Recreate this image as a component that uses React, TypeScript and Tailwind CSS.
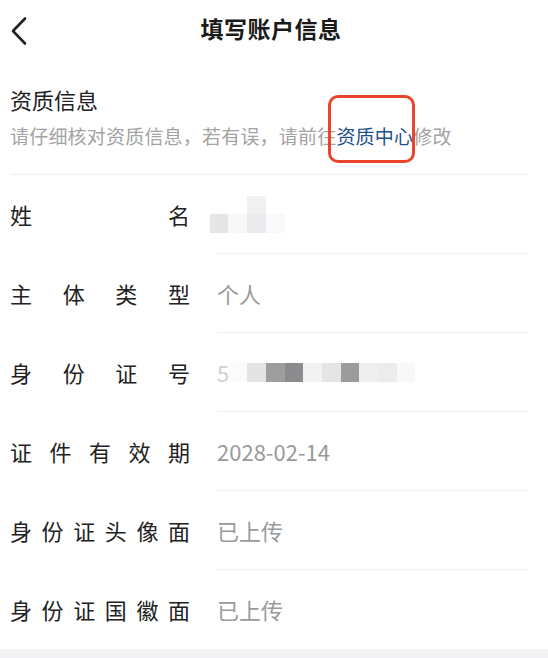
import React from "react";

const FONT = {
  fontFamily: '"Noto Sans CJK SC", "Noto Sans", "Liberation Sans", sans-serif',
};

const Label = ({ text }: { text: string }) => (
  <div className="flex w-[180px] shrink-0 justify-between text-[22px] text-[#222]">
    {text.split("").map((ch, i) => (
      <span key={i}>{ch}</span>
    ))}
  </div>
);

const NameBlur = () => (
  <div className="-ml-[7px] flex items-end">
    <div className="h-[19px] w-[18px] bg-[#e6e6e9]" />
    <div className="h-[19px] w-[19px] bg-[#f8f8f9]" />
    <div className="flex w-[19px] flex-col">
      <div className="h-[18px] bg-[#f1f1f3]" />
      <div className="h-[19px] bg-[#ebebed]" />
    </div>
    <div className="h-[19px] w-[19px] bg-[#f9f9fb]" />
  </div>
);

const IdBlur = () => (
  <div className="flex items-center">
    <span className="text-[22px] text-[#d0d0d0]">5</span>
    <div className="h-[19px] w-[18px] bg-[#fbfbfb]" />
    <div className="h-[19px] w-[19px] bg-[#e4e4e6]" />
    <div className="h-[19px] w-[19px] bg-[#9e9e9f]" />
    <div className="h-[19px] w-[18px] bg-[#8c8c8e]" />
    <div className="h-[19px] w-[19px] bg-[#f2f2f2]" />
    <div className="h-[19px] w-[19px] bg-[#e5e5e7]" />
    <div className="h-[19px] w-[18px] bg-[#9c9c9d]" />
    <div className="h-[19px] w-[19px] bg-[#efefef]" />
    <div className="h-[19px] w-[19px] bg-[#ececec]" />
    <div className="h-[19px] w-[18px] bg-[#f8f8f8]" />
  </div>
);

const rows: { label: string; value: React.ReactNode }[] = [
  { label: "姓名", value: <NameBlur /> },
  { label: "主体类型", value: "个人" },
  { label: "身份证号", value: <IdBlur /> },
  { label: "证件有效期", value: "2028-02-14" },
  { label: "身份证头像面", value: "已上传" },
  { label: "身份证国徽面", value: "已上传" },
];

export default function App() {
  return (
    <div className="flex h-[658px] w-[548px] flex-col bg-white" style={FONT}>
      {/* header */}
      <div className="relative flex h-[56px] shrink-0 items-center justify-center">
        <button className="absolute left-[6px] top-[12px] p-[4px]">
          <svg width="18" height="30" viewBox="0 0 18 30" fill="none">
            <path
              d="M15 2.5 L3 15 L15 27.5"
              stroke="#222"
              strokeWidth="2.6"
              strokeLinecap="round"
              strokeLinejoin="round"
            />
          </svg>
        </button>
        <h1 className="-ml-[6px] text-[23px] font-bold tracking-[0.5px] text-[#1a1a1a]">
          填写账户信息
        </h1>
      </div>

      {/* section intro */}
      <div className="mx-[10px] mr-[19px] border-b border-[#eeeeee] pb-[26px] pt-[28px]">
        <div className="text-[22px] leading-[30px] text-[#222]">资质信息</div>
        <div className="mt-[10px] text-[19px] leading-[24px] tracking-[0.2px] text-[#a3a3a3]">
          请仔细核对资质信息，若有误，请前往
          <span className="relative text-[#1f4f8c]">
            资质中心
            <span className="absolute -bottom-[14px] -left-[8px] -right-[2px] -top-[27px] rounded-[10px] border-[3px] border-[#e8452c]" />
          </span>
          修改
        </div>
      </div>

      {/* rows */}
      <div className="flex flex-1 flex-col">
        {rows.map((row, i) => (
          <div key={row.label} className="flex h-[79px] shrink-0 items-stretch pl-[10px] pr-[19px]">
            <div className="flex items-center">
              <Label text={row.label} />
            </div>
            <div
              className={`ml-[27px] flex flex-1 items-center text-[22px] text-[#9a9a9a] ${
                i < rows.length - 1 ? "border-b border-[#eeeeee]" : ""
              }`}
            >
              {row.value}
            </div>
          </div>
        ))}
      </div>

      <div className="h-[11px] shrink-0 bg-[#f2f2f4]" />
    </div>
  );
}
